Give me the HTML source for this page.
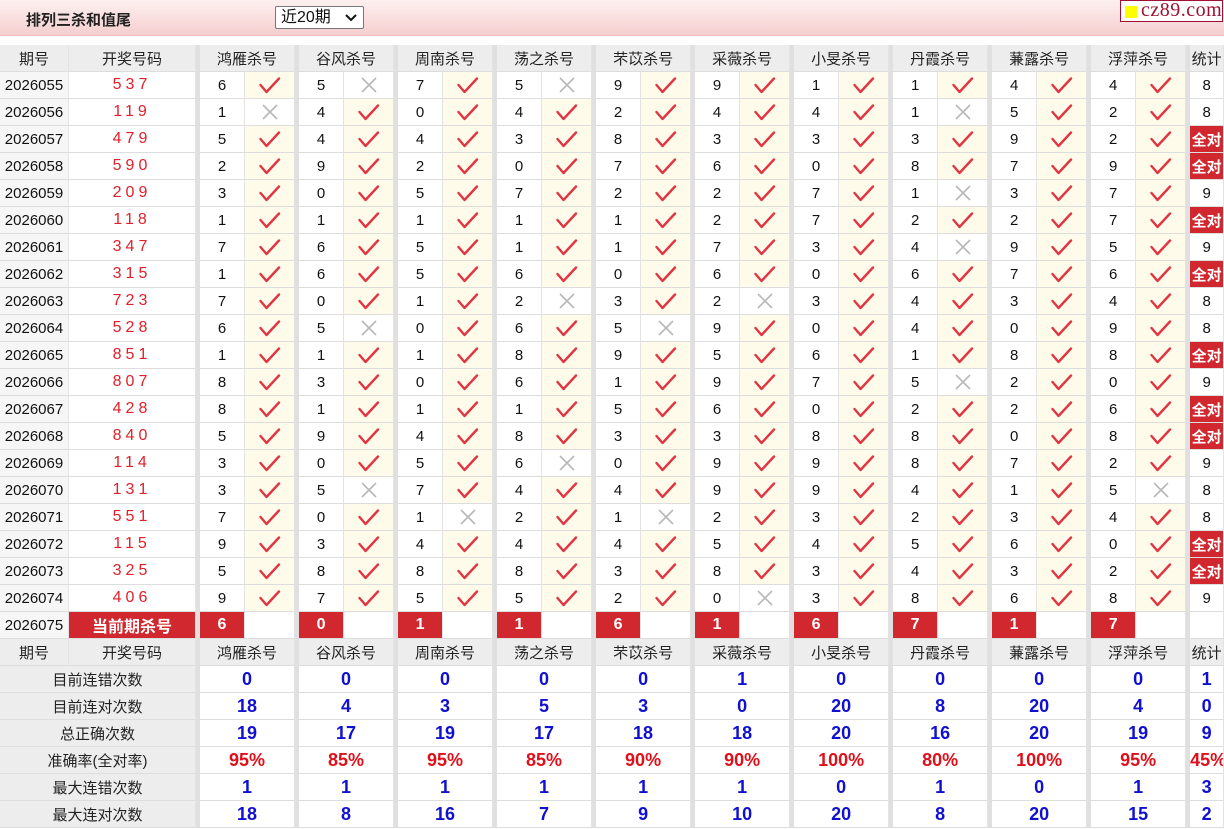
<!DOCTYPE html>
<html><head><meta charset="utf-8">
<style>
*{margin:0;padding:0;box-sizing:border-box}
body{width:1224px;height:829px;background:#fff;font-family:"Liberation Sans","Noto Sans CJK SC",sans-serif;overflow:hidden;position:relative}
.top{position:absolute;left:0;top:0;width:1224px;height:36px;background:linear-gradient(#fdf0f0,#f5cfcf);border-bottom:1px solid #f0c0c0}
.title{position:absolute;left:26px;top:9px;font-size:15px;font-weight:bold;color:#222}
.sel{position:absolute;left:275px;top:6px;width:89px;height:23px;border:1px solid #777;border-radius:2px;background:#fff;font-size:16px;padding-left:5px;line-height:21px;color:#111}
.sel svg{position:absolute;right:6px;top:7px}
.logo{position:absolute;left:1120px;top:0;width:103px;height:22px;border:1px solid #a01030;background:#fff;font-family:"Liberation Serif",serif;font-size:20px;color:#a01030;line-height:19px;padding-left:20px;letter-spacing:.5px}
.logo i{position:absolute;left:4px;top:5px;width:12px;height:12px;background:#ff0}
table{position:absolute;left:0;top:45px;border-collapse:separate;border-spacing:0;table-layout:fixed;width:1224px}
td{height:27px;border-bottom:1px solid #ddd;border-right:1px solid #e3e3e3;text-align:center;font-size:15px;color:#111;padding:0;white-space:nowrap;overflow:hidden}
.h td{background:#ededed;color:#222}
.h td.g{border-left:4px solid #e0e0e0}
td.p{background:#f6f6f6}
td.d{color:#e0202a;font-size:16px;letter-spacing:4px}
td.n{border-left:4px solid #e0e0e0}
td.y{background:#fffbea}
td.x{background:#fff}
td.s{border-left:4px solid #e0e0e0}
td.q{background:#d0282e;color:#fff;font-weight:bold}
td.r{background:#d0282e;color:#fff;font-weight:bold;font-size:16px}
td.l{background:#ededed;color:#222}
td.v{color:#1010d0;font-weight:bold;font-size:18px;border-left:4px solid #e0e0e0}
td.v.e{color:#e0101a}
svg.k,svg.c{display:block;margin:0 auto}
</style></head><body>
<svg width="0" height="0" style="position:absolute"><defs>
<g id="k"><path d="M1.5 8 L7.5 15 L20 1.5" fill="none" stroke="#e03542" stroke-width="2.4" stroke-linecap="round" stroke-linejoin="round"/></g>
<g id="c"><path d="M2 2 L16 16 M16 2 L2 16" fill="none" stroke="#b8b8b8" stroke-width="1.6"/></g>
</defs></svg>
<div class="top"><div class="title">排列三杀和值尾</div>
<div class="sel">近20期<svg width="12" height="8"><path d="M1 1 L6 6 L11 1" fill="none" stroke="#111" stroke-width="2"/></svg></div>
<div class="logo"><i></i>cz89.com</div></div>
<table>
<colgroup><col style="width:69px"><col style="width:127px">
<col style="width:49px"><col style="width:50px"><col style="width:49px"><col style="width:50px"><col style="width:49px"><col style="width:50px"><col style="width:49px"><col style="width:50px"><col style="width:49px"><col style="width:50px"><col style="width:49px"><col style="width:50px"><col style="width:49px"><col style="width:50px"><col style="width:49px"><col style="width:50px"><col style="width:49px"><col style="width:50px"><col style="width:49px"><col style="width:50px"><col style="width:38px"></colgroup>
<tr class="h"><td>期号</td><td>开奖号码</td><td class="g" colspan="2">鸿雁杀号</td><td class="g" colspan="2">谷风杀号</td><td class="g" colspan="2">周南杀号</td><td class="g" colspan="2">荡之杀号</td><td class="g" colspan="2">芣苡杀号</td><td class="g" colspan="2">采薇杀号</td><td class="g" colspan="2">小旻杀号</td><td class="g" colspan="2">丹霞杀号</td><td class="g" colspan="2">蒹露杀号</td><td class="g" colspan="2">浮萍杀号</td><td class="g">统计</td></tr>
<tr><td class="p">2026055</td><td class="d">537</td><td class="n">6</td><td class="y"><svg class="k" width="22" height="17"><use href="#k"/></svg></td><td class="n">5</td><td class="x"><svg class="c" width="18" height="18"><use href="#c"/></svg></td><td class="n">7</td><td class="y"><svg class="k" width="22" height="17"><use href="#k"/></svg></td><td class="n">5</td><td class="x"><svg class="c" width="18" height="18"><use href="#c"/></svg></td><td class="n">9</td><td class="y"><svg class="k" width="22" height="17"><use href="#k"/></svg></td><td class="n">9</td><td class="y"><svg class="k" width="22" height="17"><use href="#k"/></svg></td><td class="n">1</td><td class="y"><svg class="k" width="22" height="17"><use href="#k"/></svg></td><td class="n">1</td><td class="y"><svg class="k" width="22" height="17"><use href="#k"/></svg></td><td class="n">4</td><td class="y"><svg class="k" width="22" height="17"><use href="#k"/></svg></td><td class="n">4</td><td class="y"><svg class="k" width="22" height="17"><use href="#k"/></svg></td><td class="s">8</td></tr>
<tr><td class="p">2026056</td><td class="d">119</td><td class="n">1</td><td class="x"><svg class="c" width="18" height="18"><use href="#c"/></svg></td><td class="n">4</td><td class="y"><svg class="k" width="22" height="17"><use href="#k"/></svg></td><td class="n">0</td><td class="y"><svg class="k" width="22" height="17"><use href="#k"/></svg></td><td class="n">4</td><td class="y"><svg class="k" width="22" height="17"><use href="#k"/></svg></td><td class="n">2</td><td class="y"><svg class="k" width="22" height="17"><use href="#k"/></svg></td><td class="n">4</td><td class="y"><svg class="k" width="22" height="17"><use href="#k"/></svg></td><td class="n">4</td><td class="y"><svg class="k" width="22" height="17"><use href="#k"/></svg></td><td class="n">1</td><td class="x"><svg class="c" width="18" height="18"><use href="#c"/></svg></td><td class="n">5</td><td class="y"><svg class="k" width="22" height="17"><use href="#k"/></svg></td><td class="n">2</td><td class="y"><svg class="k" width="22" height="17"><use href="#k"/></svg></td><td class="s">8</td></tr>
<tr><td class="p">2026057</td><td class="d">479</td><td class="n">5</td><td class="y"><svg class="k" width="22" height="17"><use href="#k"/></svg></td><td class="n">4</td><td class="y"><svg class="k" width="22" height="17"><use href="#k"/></svg></td><td class="n">4</td><td class="y"><svg class="k" width="22" height="17"><use href="#k"/></svg></td><td class="n">3</td><td class="y"><svg class="k" width="22" height="17"><use href="#k"/></svg></td><td class="n">8</td><td class="y"><svg class="k" width="22" height="17"><use href="#k"/></svg></td><td class="n">3</td><td class="y"><svg class="k" width="22" height="17"><use href="#k"/></svg></td><td class="n">3</td><td class="y"><svg class="k" width="22" height="17"><use href="#k"/></svg></td><td class="n">3</td><td class="y"><svg class="k" width="22" height="17"><use href="#k"/></svg></td><td class="n">9</td><td class="y"><svg class="k" width="22" height="17"><use href="#k"/></svg></td><td class="n">2</td><td class="y"><svg class="k" width="22" height="17"><use href="#k"/></svg></td><td class="s q">全对</td></tr>
<tr><td class="p">2026058</td><td class="d">590</td><td class="n">2</td><td class="y"><svg class="k" width="22" height="17"><use href="#k"/></svg></td><td class="n">9</td><td class="y"><svg class="k" width="22" height="17"><use href="#k"/></svg></td><td class="n">2</td><td class="y"><svg class="k" width="22" height="17"><use href="#k"/></svg></td><td class="n">0</td><td class="y"><svg class="k" width="22" height="17"><use href="#k"/></svg></td><td class="n">7</td><td class="y"><svg class="k" width="22" height="17"><use href="#k"/></svg></td><td class="n">6</td><td class="y"><svg class="k" width="22" height="17"><use href="#k"/></svg></td><td class="n">0</td><td class="y"><svg class="k" width="22" height="17"><use href="#k"/></svg></td><td class="n">8</td><td class="y"><svg class="k" width="22" height="17"><use href="#k"/></svg></td><td class="n">7</td><td class="y"><svg class="k" width="22" height="17"><use href="#k"/></svg></td><td class="n">9</td><td class="y"><svg class="k" width="22" height="17"><use href="#k"/></svg></td><td class="s q">全对</td></tr>
<tr><td class="p">2026059</td><td class="d">209</td><td class="n">3</td><td class="y"><svg class="k" width="22" height="17"><use href="#k"/></svg></td><td class="n">0</td><td class="y"><svg class="k" width="22" height="17"><use href="#k"/></svg></td><td class="n">5</td><td class="y"><svg class="k" width="22" height="17"><use href="#k"/></svg></td><td class="n">7</td><td class="y"><svg class="k" width="22" height="17"><use href="#k"/></svg></td><td class="n">2</td><td class="y"><svg class="k" width="22" height="17"><use href="#k"/></svg></td><td class="n">2</td><td class="y"><svg class="k" width="22" height="17"><use href="#k"/></svg></td><td class="n">7</td><td class="y"><svg class="k" width="22" height="17"><use href="#k"/></svg></td><td class="n">1</td><td class="x"><svg class="c" width="18" height="18"><use href="#c"/></svg></td><td class="n">3</td><td class="y"><svg class="k" width="22" height="17"><use href="#k"/></svg></td><td class="n">7</td><td class="y"><svg class="k" width="22" height="17"><use href="#k"/></svg></td><td class="s">9</td></tr>
<tr><td class="p">2026060</td><td class="d">118</td><td class="n">1</td><td class="y"><svg class="k" width="22" height="17"><use href="#k"/></svg></td><td class="n">1</td><td class="y"><svg class="k" width="22" height="17"><use href="#k"/></svg></td><td class="n">1</td><td class="y"><svg class="k" width="22" height="17"><use href="#k"/></svg></td><td class="n">1</td><td class="y"><svg class="k" width="22" height="17"><use href="#k"/></svg></td><td class="n">1</td><td class="y"><svg class="k" width="22" height="17"><use href="#k"/></svg></td><td class="n">2</td><td class="y"><svg class="k" width="22" height="17"><use href="#k"/></svg></td><td class="n">7</td><td class="y"><svg class="k" width="22" height="17"><use href="#k"/></svg></td><td class="n">2</td><td class="y"><svg class="k" width="22" height="17"><use href="#k"/></svg></td><td class="n">2</td><td class="y"><svg class="k" width="22" height="17"><use href="#k"/></svg></td><td class="n">7</td><td class="y"><svg class="k" width="22" height="17"><use href="#k"/></svg></td><td class="s q">全对</td></tr>
<tr><td class="p">2026061</td><td class="d">347</td><td class="n">7</td><td class="y"><svg class="k" width="22" height="17"><use href="#k"/></svg></td><td class="n">6</td><td class="y"><svg class="k" width="22" height="17"><use href="#k"/></svg></td><td class="n">5</td><td class="y"><svg class="k" width="22" height="17"><use href="#k"/></svg></td><td class="n">1</td><td class="y"><svg class="k" width="22" height="17"><use href="#k"/></svg></td><td class="n">1</td><td class="y"><svg class="k" width="22" height="17"><use href="#k"/></svg></td><td class="n">7</td><td class="y"><svg class="k" width="22" height="17"><use href="#k"/></svg></td><td class="n">3</td><td class="y"><svg class="k" width="22" height="17"><use href="#k"/></svg></td><td class="n">4</td><td class="x"><svg class="c" width="18" height="18"><use href="#c"/></svg></td><td class="n">9</td><td class="y"><svg class="k" width="22" height="17"><use href="#k"/></svg></td><td class="n">5</td><td class="y"><svg class="k" width="22" height="17"><use href="#k"/></svg></td><td class="s">9</td></tr>
<tr><td class="p">2026062</td><td class="d">315</td><td class="n">1</td><td class="y"><svg class="k" width="22" height="17"><use href="#k"/></svg></td><td class="n">6</td><td class="y"><svg class="k" width="22" height="17"><use href="#k"/></svg></td><td class="n">5</td><td class="y"><svg class="k" width="22" height="17"><use href="#k"/></svg></td><td class="n">6</td><td class="y"><svg class="k" width="22" height="17"><use href="#k"/></svg></td><td class="n">0</td><td class="y"><svg class="k" width="22" height="17"><use href="#k"/></svg></td><td class="n">6</td><td class="y"><svg class="k" width="22" height="17"><use href="#k"/></svg></td><td class="n">0</td><td class="y"><svg class="k" width="22" height="17"><use href="#k"/></svg></td><td class="n">6</td><td class="y"><svg class="k" width="22" height="17"><use href="#k"/></svg></td><td class="n">7</td><td class="y"><svg class="k" width="22" height="17"><use href="#k"/></svg></td><td class="n">6</td><td class="y"><svg class="k" width="22" height="17"><use href="#k"/></svg></td><td class="s q">全对</td></tr>
<tr><td class="p">2026063</td><td class="d">723</td><td class="n">7</td><td class="y"><svg class="k" width="22" height="17"><use href="#k"/></svg></td><td class="n">0</td><td class="y"><svg class="k" width="22" height="17"><use href="#k"/></svg></td><td class="n">1</td><td class="y"><svg class="k" width="22" height="17"><use href="#k"/></svg></td><td class="n">2</td><td class="x"><svg class="c" width="18" height="18"><use href="#c"/></svg></td><td class="n">3</td><td class="y"><svg class="k" width="22" height="17"><use href="#k"/></svg></td><td class="n">2</td><td class="x"><svg class="c" width="18" height="18"><use href="#c"/></svg></td><td class="n">3</td><td class="y"><svg class="k" width="22" height="17"><use href="#k"/></svg></td><td class="n">4</td><td class="y"><svg class="k" width="22" height="17"><use href="#k"/></svg></td><td class="n">3</td><td class="y"><svg class="k" width="22" height="17"><use href="#k"/></svg></td><td class="n">4</td><td class="y"><svg class="k" width="22" height="17"><use href="#k"/></svg></td><td class="s">8</td></tr>
<tr><td class="p">2026064</td><td class="d">528</td><td class="n">6</td><td class="y"><svg class="k" width="22" height="17"><use href="#k"/></svg></td><td class="n">5</td><td class="x"><svg class="c" width="18" height="18"><use href="#c"/></svg></td><td class="n">0</td><td class="y"><svg class="k" width="22" height="17"><use href="#k"/></svg></td><td class="n">6</td><td class="y"><svg class="k" width="22" height="17"><use href="#k"/></svg></td><td class="n">5</td><td class="x"><svg class="c" width="18" height="18"><use href="#c"/></svg></td><td class="n">9</td><td class="y"><svg class="k" width="22" height="17"><use href="#k"/></svg></td><td class="n">0</td><td class="y"><svg class="k" width="22" height="17"><use href="#k"/></svg></td><td class="n">4</td><td class="y"><svg class="k" width="22" height="17"><use href="#k"/></svg></td><td class="n">0</td><td class="y"><svg class="k" width="22" height="17"><use href="#k"/></svg></td><td class="n">9</td><td class="y"><svg class="k" width="22" height="17"><use href="#k"/></svg></td><td class="s">8</td></tr>
<tr><td class="p">2026065</td><td class="d">851</td><td class="n">1</td><td class="y"><svg class="k" width="22" height="17"><use href="#k"/></svg></td><td class="n">1</td><td class="y"><svg class="k" width="22" height="17"><use href="#k"/></svg></td><td class="n">1</td><td class="y"><svg class="k" width="22" height="17"><use href="#k"/></svg></td><td class="n">8</td><td class="y"><svg class="k" width="22" height="17"><use href="#k"/></svg></td><td class="n">9</td><td class="y"><svg class="k" width="22" height="17"><use href="#k"/></svg></td><td class="n">5</td><td class="y"><svg class="k" width="22" height="17"><use href="#k"/></svg></td><td class="n">6</td><td class="y"><svg class="k" width="22" height="17"><use href="#k"/></svg></td><td class="n">1</td><td class="y"><svg class="k" width="22" height="17"><use href="#k"/></svg></td><td class="n">8</td><td class="y"><svg class="k" width="22" height="17"><use href="#k"/></svg></td><td class="n">8</td><td class="y"><svg class="k" width="22" height="17"><use href="#k"/></svg></td><td class="s q">全对</td></tr>
<tr><td class="p">2026066</td><td class="d">807</td><td class="n">8</td><td class="y"><svg class="k" width="22" height="17"><use href="#k"/></svg></td><td class="n">3</td><td class="y"><svg class="k" width="22" height="17"><use href="#k"/></svg></td><td class="n">0</td><td class="y"><svg class="k" width="22" height="17"><use href="#k"/></svg></td><td class="n">6</td><td class="y"><svg class="k" width="22" height="17"><use href="#k"/></svg></td><td class="n">1</td><td class="y"><svg class="k" width="22" height="17"><use href="#k"/></svg></td><td class="n">9</td><td class="y"><svg class="k" width="22" height="17"><use href="#k"/></svg></td><td class="n">7</td><td class="y"><svg class="k" width="22" height="17"><use href="#k"/></svg></td><td class="n">5</td><td class="x"><svg class="c" width="18" height="18"><use href="#c"/></svg></td><td class="n">2</td><td class="y"><svg class="k" width="22" height="17"><use href="#k"/></svg></td><td class="n">0</td><td class="y"><svg class="k" width="22" height="17"><use href="#k"/></svg></td><td class="s">9</td></tr>
<tr><td class="p">2026067</td><td class="d">428</td><td class="n">8</td><td class="y"><svg class="k" width="22" height="17"><use href="#k"/></svg></td><td class="n">1</td><td class="y"><svg class="k" width="22" height="17"><use href="#k"/></svg></td><td class="n">1</td><td class="y"><svg class="k" width="22" height="17"><use href="#k"/></svg></td><td class="n">1</td><td class="y"><svg class="k" width="22" height="17"><use href="#k"/></svg></td><td class="n">5</td><td class="y"><svg class="k" width="22" height="17"><use href="#k"/></svg></td><td class="n">6</td><td class="y"><svg class="k" width="22" height="17"><use href="#k"/></svg></td><td class="n">0</td><td class="y"><svg class="k" width="22" height="17"><use href="#k"/></svg></td><td class="n">2</td><td class="y"><svg class="k" width="22" height="17"><use href="#k"/></svg></td><td class="n">2</td><td class="y"><svg class="k" width="22" height="17"><use href="#k"/></svg></td><td class="n">6</td><td class="y"><svg class="k" width="22" height="17"><use href="#k"/></svg></td><td class="s q">全对</td></tr>
<tr><td class="p">2026068</td><td class="d">840</td><td class="n">5</td><td class="y"><svg class="k" width="22" height="17"><use href="#k"/></svg></td><td class="n">9</td><td class="y"><svg class="k" width="22" height="17"><use href="#k"/></svg></td><td class="n">4</td><td class="y"><svg class="k" width="22" height="17"><use href="#k"/></svg></td><td class="n">8</td><td class="y"><svg class="k" width="22" height="17"><use href="#k"/></svg></td><td class="n">3</td><td class="y"><svg class="k" width="22" height="17"><use href="#k"/></svg></td><td class="n">3</td><td class="y"><svg class="k" width="22" height="17"><use href="#k"/></svg></td><td class="n">8</td><td class="y"><svg class="k" width="22" height="17"><use href="#k"/></svg></td><td class="n">8</td><td class="y"><svg class="k" width="22" height="17"><use href="#k"/></svg></td><td class="n">0</td><td class="y"><svg class="k" width="22" height="17"><use href="#k"/></svg></td><td class="n">8</td><td class="y"><svg class="k" width="22" height="17"><use href="#k"/></svg></td><td class="s q">全对</td></tr>
<tr><td class="p">2026069</td><td class="d">114</td><td class="n">3</td><td class="y"><svg class="k" width="22" height="17"><use href="#k"/></svg></td><td class="n">0</td><td class="y"><svg class="k" width="22" height="17"><use href="#k"/></svg></td><td class="n">5</td><td class="y"><svg class="k" width="22" height="17"><use href="#k"/></svg></td><td class="n">6</td><td class="x"><svg class="c" width="18" height="18"><use href="#c"/></svg></td><td class="n">0</td><td class="y"><svg class="k" width="22" height="17"><use href="#k"/></svg></td><td class="n">9</td><td class="y"><svg class="k" width="22" height="17"><use href="#k"/></svg></td><td class="n">9</td><td class="y"><svg class="k" width="22" height="17"><use href="#k"/></svg></td><td class="n">8</td><td class="y"><svg class="k" width="22" height="17"><use href="#k"/></svg></td><td class="n">7</td><td class="y"><svg class="k" width="22" height="17"><use href="#k"/></svg></td><td class="n">2</td><td class="y"><svg class="k" width="22" height="17"><use href="#k"/></svg></td><td class="s">9</td></tr>
<tr><td class="p">2026070</td><td class="d">131</td><td class="n">3</td><td class="y"><svg class="k" width="22" height="17"><use href="#k"/></svg></td><td class="n">5</td><td class="x"><svg class="c" width="18" height="18"><use href="#c"/></svg></td><td class="n">7</td><td class="y"><svg class="k" width="22" height="17"><use href="#k"/></svg></td><td class="n">4</td><td class="y"><svg class="k" width="22" height="17"><use href="#k"/></svg></td><td class="n">4</td><td class="y"><svg class="k" width="22" height="17"><use href="#k"/></svg></td><td class="n">9</td><td class="y"><svg class="k" width="22" height="17"><use href="#k"/></svg></td><td class="n">9</td><td class="y"><svg class="k" width="22" height="17"><use href="#k"/></svg></td><td class="n">4</td><td class="y"><svg class="k" width="22" height="17"><use href="#k"/></svg></td><td class="n">1</td><td class="y"><svg class="k" width="22" height="17"><use href="#k"/></svg></td><td class="n">5</td><td class="x"><svg class="c" width="18" height="18"><use href="#c"/></svg></td><td class="s">8</td></tr>
<tr><td class="p">2026071</td><td class="d">551</td><td class="n">7</td><td class="y"><svg class="k" width="22" height="17"><use href="#k"/></svg></td><td class="n">0</td><td class="y"><svg class="k" width="22" height="17"><use href="#k"/></svg></td><td class="n">1</td><td class="x"><svg class="c" width="18" height="18"><use href="#c"/></svg></td><td class="n">2</td><td class="y"><svg class="k" width="22" height="17"><use href="#k"/></svg></td><td class="n">1</td><td class="x"><svg class="c" width="18" height="18"><use href="#c"/></svg></td><td class="n">2</td><td class="y"><svg class="k" width="22" height="17"><use href="#k"/></svg></td><td class="n">3</td><td class="y"><svg class="k" width="22" height="17"><use href="#k"/></svg></td><td class="n">2</td><td class="y"><svg class="k" width="22" height="17"><use href="#k"/></svg></td><td class="n">3</td><td class="y"><svg class="k" width="22" height="17"><use href="#k"/></svg></td><td class="n">4</td><td class="y"><svg class="k" width="22" height="17"><use href="#k"/></svg></td><td class="s">8</td></tr>
<tr><td class="p">2026072</td><td class="d">115</td><td class="n">9</td><td class="y"><svg class="k" width="22" height="17"><use href="#k"/></svg></td><td class="n">3</td><td class="y"><svg class="k" width="22" height="17"><use href="#k"/></svg></td><td class="n">4</td><td class="y"><svg class="k" width="22" height="17"><use href="#k"/></svg></td><td class="n">4</td><td class="y"><svg class="k" width="22" height="17"><use href="#k"/></svg></td><td class="n">4</td><td class="y"><svg class="k" width="22" height="17"><use href="#k"/></svg></td><td class="n">5</td><td class="y"><svg class="k" width="22" height="17"><use href="#k"/></svg></td><td class="n">4</td><td class="y"><svg class="k" width="22" height="17"><use href="#k"/></svg></td><td class="n">5</td><td class="y"><svg class="k" width="22" height="17"><use href="#k"/></svg></td><td class="n">6</td><td class="y"><svg class="k" width="22" height="17"><use href="#k"/></svg></td><td class="n">0</td><td class="y"><svg class="k" width="22" height="17"><use href="#k"/></svg></td><td class="s q">全对</td></tr>
<tr><td class="p">2026073</td><td class="d">325</td><td class="n">5</td><td class="y"><svg class="k" width="22" height="17"><use href="#k"/></svg></td><td class="n">8</td><td class="y"><svg class="k" width="22" height="17"><use href="#k"/></svg></td><td class="n">8</td><td class="y"><svg class="k" width="22" height="17"><use href="#k"/></svg></td><td class="n">8</td><td class="y"><svg class="k" width="22" height="17"><use href="#k"/></svg></td><td class="n">3</td><td class="y"><svg class="k" width="22" height="17"><use href="#k"/></svg></td><td class="n">8</td><td class="y"><svg class="k" width="22" height="17"><use href="#k"/></svg></td><td class="n">3</td><td class="y"><svg class="k" width="22" height="17"><use href="#k"/></svg></td><td class="n">4</td><td class="y"><svg class="k" width="22" height="17"><use href="#k"/></svg></td><td class="n">3</td><td class="y"><svg class="k" width="22" height="17"><use href="#k"/></svg></td><td class="n">2</td><td class="y"><svg class="k" width="22" height="17"><use href="#k"/></svg></td><td class="s q">全对</td></tr>
<tr><td class="p">2026074</td><td class="d">406</td><td class="n">9</td><td class="y"><svg class="k" width="22" height="17"><use href="#k"/></svg></td><td class="n">7</td><td class="y"><svg class="k" width="22" height="17"><use href="#k"/></svg></td><td class="n">5</td><td class="y"><svg class="k" width="22" height="17"><use href="#k"/></svg></td><td class="n">5</td><td class="y"><svg class="k" width="22" height="17"><use href="#k"/></svg></td><td class="n">2</td><td class="y"><svg class="k" width="22" height="17"><use href="#k"/></svg></td><td class="n">0</td><td class="x"><svg class="c" width="18" height="18"><use href="#c"/></svg></td><td class="n">3</td><td class="y"><svg class="k" width="22" height="17"><use href="#k"/></svg></td><td class="n">8</td><td class="y"><svg class="k" width="22" height="17"><use href="#k"/></svg></td><td class="n">6</td><td class="y"><svg class="k" width="22" height="17"><use href="#k"/></svg></td><td class="n">8</td><td class="y"><svg class="k" width="22" height="17"><use href="#k"/></svg></td><td class="s">9</td></tr>
<tr><td class="p">2026075</td><td class="r">当前期杀号</td><td class="n r">6</td><td></td><td class="n r">0</td><td></td><td class="n r">1</td><td></td><td class="n r">1</td><td></td><td class="n r">6</td><td></td><td class="n r">1</td><td></td><td class="n r">6</td><td></td><td class="n r">7</td><td></td><td class="n r">1</td><td></td><td class="n r">7</td><td></td><td class="s"></td></tr>
<tr class="h"><td>期号</td><td>开奖号码</td><td class="g" colspan="2">鸿雁杀号</td><td class="g" colspan="2">谷风杀号</td><td class="g" colspan="2">周南杀号</td><td class="g" colspan="2">荡之杀号</td><td class="g" colspan="2">芣苡杀号</td><td class="g" colspan="2">采薇杀号</td><td class="g" colspan="2">小旻杀号</td><td class="g" colspan="2">丹霞杀号</td><td class="g" colspan="2">蒹露杀号</td><td class="g" colspan="2">浮萍杀号</td><td class="g">统计</td></tr>
<tr><td class="l" colspan="2">目前连错次数</td><td class="v" colspan="2">0</td><td class="v" colspan="2">0</td><td class="v" colspan="2">0</td><td class="v" colspan="2">0</td><td class="v" colspan="2">0</td><td class="v" colspan="2">1</td><td class="v" colspan="2">0</td><td class="v" colspan="2">0</td><td class="v" colspan="2">0</td><td class="v" colspan="2">0</td><td class="v">1</td></tr>
<tr><td class="l" colspan="2">目前连对次数</td><td class="v" colspan="2">18</td><td class="v" colspan="2">4</td><td class="v" colspan="2">3</td><td class="v" colspan="2">5</td><td class="v" colspan="2">3</td><td class="v" colspan="2">0</td><td class="v" colspan="2">20</td><td class="v" colspan="2">8</td><td class="v" colspan="2">20</td><td class="v" colspan="2">4</td><td class="v">0</td></tr>
<tr><td class="l" colspan="2">总正确次数</td><td class="v" colspan="2">19</td><td class="v" colspan="2">17</td><td class="v" colspan="2">19</td><td class="v" colspan="2">17</td><td class="v" colspan="2">18</td><td class="v" colspan="2">18</td><td class="v" colspan="2">20</td><td class="v" colspan="2">16</td><td class="v" colspan="2">20</td><td class="v" colspan="2">19</td><td class="v">9</td></tr>
<tr><td class="l" colspan="2">准确率(全对率)</td><td class="v e" colspan="2">95%</td><td class="v e" colspan="2">85%</td><td class="v e" colspan="2">95%</td><td class="v e" colspan="2">85%</td><td class="v e" colspan="2">90%</td><td class="v e" colspan="2">90%</td><td class="v e" colspan="2">100%</td><td class="v e" colspan="2">80%</td><td class="v e" colspan="2">100%</td><td class="v e" colspan="2">95%</td><td class="v e">45%</td></tr>
<tr><td class="l" colspan="2">最大连错次数</td><td class="v" colspan="2">1</td><td class="v" colspan="2">1</td><td class="v" colspan="2">1</td><td class="v" colspan="2">1</td><td class="v" colspan="2">1</td><td class="v" colspan="2">1</td><td class="v" colspan="2">0</td><td class="v" colspan="2">1</td><td class="v" colspan="2">0</td><td class="v" colspan="2">1</td><td class="v">3</td></tr>
<tr><td class="l" colspan="2">最大连对次数</td><td class="v" colspan="2">18</td><td class="v" colspan="2">8</td><td class="v" colspan="2">16</td><td class="v" colspan="2">7</td><td class="v" colspan="2">9</td><td class="v" colspan="2">10</td><td class="v" colspan="2">20</td><td class="v" colspan="2">8</td><td class="v" colspan="2">20</td><td class="v" colspan="2">15</td><td class="v">2</td></tr>
</table>
</body></html>
